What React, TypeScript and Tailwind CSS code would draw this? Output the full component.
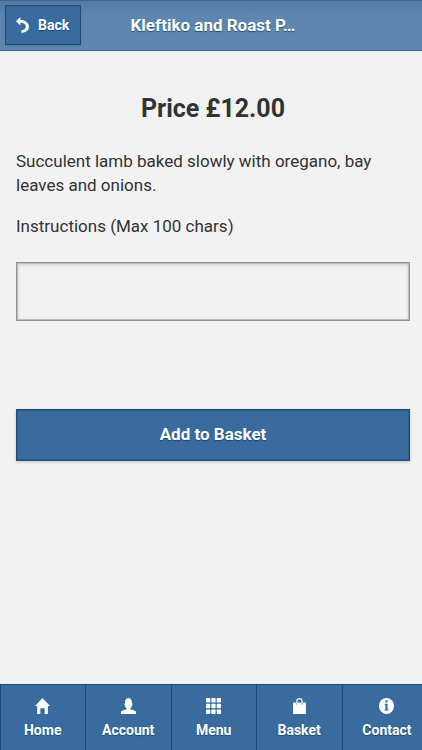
import type { ReactNode } from "react";

const glyph = "h-4 w-[15px] fill-white";

const HomeIcon = (
  <svg viewBox="0 0 14 14" preserveAspectRatio="none" className={glyph} aria-hidden="true">
    <polygon points="7,0 0,7 2,7 2,14 5,14 5,9 9,9 9,14 12,14 12,7 14,7" />
  </svg>
);

const UserIcon = (
  <svg viewBox="0 0 14 14" preserveAspectRatio="none" className={glyph} aria-hidden="true">
    <path d="M8.85 10.1c-.18-.4-.2-.76-.15-1.1.9-.51 1.300-1.380 1.450-2.540.6-.1.61-.5.61-.96 0-.44 0-.8-.5-.94V4.500c0-2.100-1-4-2.260-4C8 .5 7.500 0 6.500 0 4.800 0 3.700 1.880 3.700 4.500v.06c-.5.14-.5.500-.5.94 0 .47 0 .86.6.96.16 1.160.620 2.030 1.500 2.540.05.340.03.700-.15 1.100C1.500 10.500 0 12 0 12v2h14v-2s-1.500-1.500-5.150-1.900z" />
  </svg>
);

const GridIcon = (
  <svg viewBox="0 0 14 14" preserveAspectRatio="none" className={glyph} aria-hidden="true">
    {[0, 5, 10].map((y) =>
      [0, 5, 10].map((x) => <rect key={`${x}-${y}`} x={x} y={y} width="4" height="4" rx="0.8" />),
    )}
  </svg>
);

const BagIcon = (
  <svg viewBox="0 0 14 14" preserveAspectRatio="none" className={glyph} aria-hidden="true">
    <path d="M1 4h12v10H1z" />
    <path d="M4.500 4.500V3a2.500 2.500 0 0 1 5 0v1.500" fill="none" stroke="white" strokeWidth="1" />
    <path d="M4.500 4.500v1.300M9.500 4.500v1.300" stroke="#396b9e" strokeWidth="0.7" />
  </svg>
);

const InfoIcon = (
  <svg viewBox="0 0 14 14" preserveAspectRatio="none" className={glyph} aria-hidden="true">
    <circle cx="7" cy="7" r="7" />
    <path d="M6 2h2v2H6zM5 5h3v5h1v1H5v-1h1V6H5z" fill="#396b9e" />
  </svg>
);

const tabs: { label: string; icon: ReactNode }[] = [
  { label: "Home", icon: HomeIcon },
  { label: "Account", icon: UserIcon },
  { label: "Menu", icon: GridIcon },
  { label: "Basket", icon: BagIcon },
  { label: "Contact", icon: InfoIcon },
];

export default function App() {
  return (
    <div className="flex min-h-screen flex-col bg-[#f2f2f2] font-[Roboto,sans-serif] text-[#333333]">
      <header className="grid h-[51px] grid-cols-[80px_1fr_80px] items-center border-y border-t-[#3f6795] border-b-[#3f6795] bg-linear-to-b from-[#5379a5] to-[#5d87b0] to-30% pb-[2px] pl-1">
        <button
          type="button"
          className="ml-px flex h-10 w-[76px] items-center gap-[9px] border border-[#1b4c77] bg-[#396b9e] pl-[10px] text-sm font-bold text-white shadow-sm text-shadow-[0_1px_1px_#1b4c77]"
        >
          <svg viewBox="0 0 12 15" preserveAspectRatio="none" className="h-4 w-[13px] fill-white" aria-hidden="true">
            <path d="M4 2.500V0L0 4l4 4V5.500s5 0 5 3.500-4 3.500-4 3.500V15s7 0 7-6-8-6.500-8-6.500z" />
          </svg>
          Back
        </button>
        <h1 className="truncate px-11 text-center text-[17px] leading-6 font-bold text-white text-shadow-[0_1px_1px_#1b4c77]">
          Kleftiko and Roast P…
        </h1>
      </header>

      <main className="flex-1 pr-3 pl-4">
        <h2 className="mt-10 text-center text-[25px] leading-9 font-bold">Price £12.00</h2>
        <p className="mt-[22px] text-[17px] leading-6">Succulent lamb baked slowly with oregano, bay leaves and onions.</p>
        <label htmlFor="instructions" className="mt-[17px] block text-[17px] leading-6">
          Instructions (Max 100 chars)
        </label>
        <textarea
          id="instructions"
          maxLength={100}
          className="mt-6 block h-[59px] w-full resize-none border border-[#929292] bg-[#f2f2f2] p-2 text-[17px] shadow-[inset_0_0_0_1px_#bdbdbd,inset_0_1px_4px_rgba(0,0,0,0.2)] outline-none"
        />
        <button
          type="button"
          className="mt-[88px] block h-[52px] w-full border border-[#1f4f7a] bg-[#396b9e] text-[17px] font-bold text-white shadow-[inset_0_0_0_1px_#2b5b8b,0_1px_3px_rgba(0,0,0,0.2)] text-shadow-[0_1px_1px_#1b4c77]"
        >
          Add to Basket
        </button>
      </main>

      <nav className="flex h-[66px] border-t border-[#1f4f7a] bg-[#396b9e]">
        {tabs.map(({ label, icon }) => (
          <a
            key={label}
            href="#"
            className="flex basis-[20.25%] flex-col items-center gap-1 border-l border-[#1b4c77] pt-[13px] pr-px text-sm leading-6 font-bold text-white text-shadow-[0_1px_1px_#1b4c77] last:flex-1 last:pl-[10px]"
          >
            {icon}
            {label}
          </a>
        ))}
      </nav>
    </div>
  );
}
